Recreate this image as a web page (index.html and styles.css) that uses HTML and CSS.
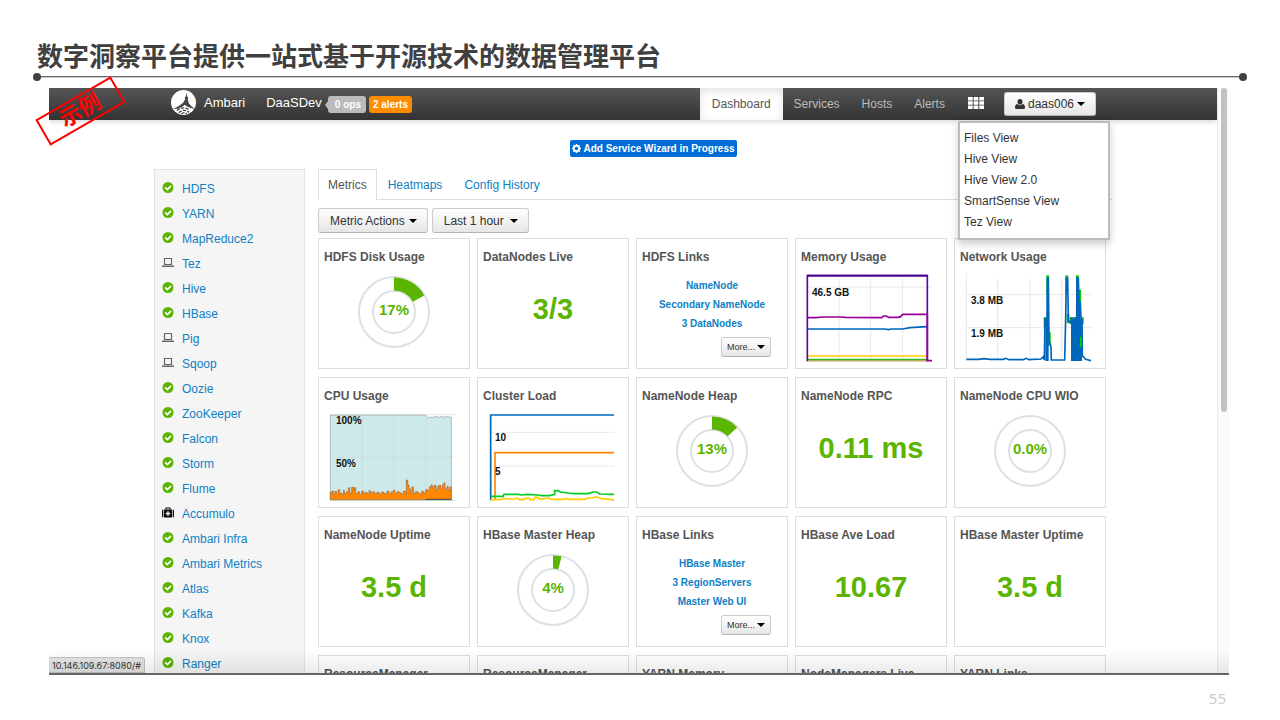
FILE: index.html
```html
<!DOCTYPE html>
<html lang="zh-CN">
<head>
  <meta charset="UTF-8" />
  <meta name="viewport" content="width=device-width, initial-scale=1.0" />
  <title>数字洞察平台</title>
  <link rel="stylesheet" href="styles.css">
</head>
<body>
  <!-- shared icons -->
  <svg class="sprite" aria-hidden="true">
    <symbol id="ok" viewBox="0 0 10 10"><circle cx="5" cy="5" r="5" fill="#5ab400"/><path d="M2.4 4.9 4.4 6.9 7.8 3.5" fill="none" stroke="#fff" stroke-width="1.5"/></symbol>
    <symbol id="laptop" viewBox="0 0 12 11"><path d="M2.5 1.500h7v6h-7z" fill="none" stroke="#666" stroke-width="1.200"/><path d="M0 8.500h12v1.500H0z" fill="#666"/></symbol>
    <symbol id="medkit" viewBox="0 0 12 11"><path d="M4 2.5V1h4v1.500" fill="none" stroke="#111" stroke-width="1.2"/><path d="M1.300 2.500Q0 2.500 0 3.500v6q0 1 1.300 1zM2 2.500h8v8H2zM10.700 2.500Q12 2.500 12 3.500v6q0 1-1.300 1z" fill="#111"/><path d="M6 4.300v4.400M3.800 6.500h4.400" stroke="#fff" stroke-width="1.400"/></symbol>
  </svg>

  <header class="slide-head">
    <h1>数字洞察平台提供一站式基于开源技术的数据管理平台</h1>
  </header>

  <main class="stage">
    <div class="window">
      <div class="page">
        <nav class="navbar">
          <div class="container nav-inner">
            <svg class="logo" viewBox="0 0 76 76">
              <circle cx="38" cy="38" r="38" fill="#fff"/>
              <path d="M47 7 49 20 52 23 51 28 54 40 63 50 73 58 60 55 49 50 42 45 33 52 20 57 6 58 24 49 37 39 43 28 42 23 45 20z" fill="#444"/>
              <path d="M18 62Q36 48 57 60M24 69Q38 55 55 68M32 73Q39 65 48 73" fill="none" stroke="#444" stroke-width="4" stroke-dasharray="10 4"/>
            </svg>
            <a class="brand" href="#">Ambari</a>
            <a class="cluster" href="#">DaaSDev</a>
            <a class="badge ops" href="#">0 ops</a>
            <a class="badge alerts" href="#">2 alerts</a>
            <div class="nav-links">
              <a class="active" href="#">Dashboard</a>
              <a href="#">Services</a>
              <a href="#">Hosts</a>
              <a href="#">Alerts</a>
              <button class="views" aria-label="Views">
                <svg width="16" height="12" viewBox="0 0 16 12" fill="#fff"><path d="M0 0h4.700v3.400H0zM5.600 0h4.700v3.400H5.600zM11.300 0H16v3.400h-4.700zM0 4.300h4.700v3.400H0zM5.600 4.300h4.700v3.400H5.600zM11.300 4.300H16v3.400h-4.700zM0 8.600h4.700V12H0zM5.600 8.600h4.700V12H5.600zM11.300 8.600H16V12h-4.700z"/></svg>
              </button>
            </div>
            <button class="btn user">
              <svg width="10" height="10" viewBox="0 0 10 10" fill="#333"><path d="M5 0Q7.500 0 7.500 2.800 7.500 5.600 5 5.600 2.500 5.600 2.500 2.800 2.500 0 5 0zM2.500 5Q5 7.500 7.500 5 10 5.200 10 8.500 10 10 8.500 10h-7Q0 10 0 8.500 0 5.200 2.500 5z"/></svg>
              daas006 <i class="caret"></i>
            </button>
            <div class="dropdown">
              <a href="#">Files View</a>
              <a href="#">Hive View</a>
              <a href="#">Hive View 2.0</a>
              <a href="#">SmartSense View</a>
              <a href="#">Tez View</a>
            </div>
          </div>
        </nav>

        <div class="container notice">
          <a class="wizard" href="#">
            <svg width="9" height="9" viewBox="0 0 10 10"><circle cx="5" cy="5" r="3" fill="none" stroke="#fff" stroke-width="2"/><path d="M5 0v2M5 8v2M0 5h2M8 5h2M1.500 1.500 3 3M7 7l1.500 1.500M1.500 8.500 3 7M7 3l1.500-1.500" stroke="#fff" stroke-width="1.800"/></svg>
            Add Service Wizard in Progress
          </a>
        </div>

        <div class="container columns">
          <aside class="sidebar">
            <a href="#"><svg><use href="#ok"/></svg>HDFS</a>
            <a href="#"><svg><use href="#ok"/></svg>YARN</a>
            <a href="#"><svg><use href="#ok"/></svg>MapReduce2</a>
            <a href="#"><svg><use href="#laptop"/></svg>Tez</a>
            <a href="#"><svg><use href="#ok"/></svg>Hive</a>
            <a href="#"><svg><use href="#ok"/></svg>HBase</a>
            <a href="#"><svg><use href="#laptop"/></svg>Pig</a>
            <a href="#"><svg><use href="#laptop"/></svg>Sqoop</a>
            <a href="#"><svg><use href="#ok"/></svg>Oozie</a>
            <a href="#"><svg><use href="#ok"/></svg>ZooKeeper</a>
            <a href="#"><svg><use href="#ok"/></svg>Falcon</a>
            <a href="#"><svg><use href="#ok"/></svg>Storm</a>
            <a href="#"><svg><use href="#ok"/></svg>Flume</a>
            <a href="#"><svg><use href="#medkit"/></svg>Accumulo</a>
            <a href="#"><svg><use href="#ok"/></svg>Ambari Infra</a>
            <a href="#"><svg><use href="#ok"/></svg>Ambari Metrics</a>
            <a href="#"><svg><use href="#ok"/></svg>Atlas</a>
            <a href="#"><svg><use href="#ok"/></svg>Kafka</a>
            <a href="#"><svg><use href="#ok"/></svg>Knox</a>
            <a href="#"><svg><use href="#ok"/></svg>Ranger</a>
          </aside>

          <section class="main">
            <div class="tabs">
              <a class="active" href="#">Metrics</a>
              <a href="#">Heatmaps</a>
              <a href="#">Config History</a>
            </div>
            <div class="toolbar">
              <button class="btn">Metric Actions <i class="caret"></i></button>
              <button class="btn">Last 1 hour <i class="caret wide"></i></button>
            </div>

            <div class="widgets">
              <div class="widget">
                <h2>HDFS Disk Usage</h2>
                <svg class="donut"><circle class="ring" cx="36" cy="36" r="35"/><circle class="ring" cx="36" cy="36" r="21"/><circle class="slice" cx="36" cy="36" r="28" pathLength="100" stroke-dasharray="17 83" transform="rotate(-90 36 36)"/><text x="36" y="39">17%</text></svg>
              </div>
              <div class="widget">
                <h2>DataNodes Live</h2>
                <p class="value">3/3</p>
              </div>
              <div class="widget">
                <h2>HDFS Links</h2>
                <div class="links">
                  <a href="#">NameNode</a>
                  <a href="#">Secondary NameNode</a>
                  <a href="#">3 DataNodes</a>
                </div>
                <button class="btn more">More... <i class="caret"></i></button>
              </div>
              <div class="widget">
                <h2>Memory Usage</h2>
                <svg class="chart">
                  <svg viewBox="0 0 378 264" fill="none" stroke-width="5">
                    <path class="grid" d="M99 15V260M194 15V260M290 15V260M4 39H378"/>
                    <path d="M4 246H364" stroke="#fc0"/>
                    <path d="M4 257H364" stroke="#3b2"/>
                    <path d="M4 261H364" stroke="#c60" stroke-width="2"/>
                    <path d="M4 165H235L248 167 256 165H290L312 161 364 158" stroke="#06b"/>
                    <path d="M4 131 30 131 50 129 105 129 120 130 228 131 232 126 240 126 248 130H276L284 128 290 121H364" stroke="#909"/>
                    <path d="M4 262V5H364V262" stroke="#60a"/>
                    <path d="M4 5H364" stroke="#408"/>
                    <path d="M364 120V260H378" stroke="#909"/>
                  </svg>
                  <text x="6" y="22">46.5 GB</text>
                </svg>
              </div>
              <div class="widget">
                <h2>Network Usage</h2>
                <svg class="chart">
                  <svg viewBox="0 0 378 264" fill="none" stroke-width="5">
                    <path class="grid" d="M4 0V260M98 15V260M195 15V260M290 15V260M4 62H378M4 161H378"/>
                    <path d="M248 4V60M305 4V60M337 4V60M344 47V90M240 130V160M253 175V215M309 120V148M318 130V150M332 130V150M346 185V225M352 130V150" stroke="#0c0" stroke-width="8"/>
                    <path d="M4 256H40L58 254 75 256 115 256 122 253 132 257 175 257 184 253 192 257 228 255 235 248 238 258 240 134 246 134 247 12 250 12 252 200 258 218 259 258H299L302 134 304 12 308 12 310 140 316 146 320 132 335 132 336 12 340 12 342 85 346 85 348 132 351 134 352 245 362 256 378 260" stroke="#06b"/>
                    <path d="M318 134H335V12H341V85H346V134H352V190H345V220H351V261H318zM241 134H246V12H251V261H241z" fill="#06b"/>
                  </svg>
                  <text x="6" y="30">3.8 MB</text>
                  <text x="6" y="63">1.9 MB</text>
                </svg>
              </div>

              <div class="widget">
                <h2>CPU Usage</h2>
                <svg class="chart">
                  <svg viewBox="0 0 378 264" fill="none" stroke-width="2">
                    <path d="M4 6H290L296 15 304 12 312 13 320 10 330 13 338 10 346 13 355 11 367 13V260H4z" fill="#cceaea" stroke="#999"/>
                    <path class="grid" d="M100 15V260M195 15V260M291 15V260M4 5H380M4 133H380"/>
                    <path d="M4 260V238H9V234H13V244H18V235H23V242H28V230H32V240H37V244H43V232H46V242H52V236H58V224H62V240H68V223H73V232H76V224H80V242H87V236H91V244H98V234H103V242H108V238H114V243H120V233H124V239H131V236H137V242H144V238H151V244H158V237H164V242H170V240H175V234H180V242H187V236H193V232H198V242H204V236H210V239H217V243H223V234H229V244H232V201H236V216H240V228H245V240H249V222H253V242H259V236H266V240H272V243H278V235H283V240H290V230H296V234H301V222H306V216H310V225H315V217H321V232H326V220H330V217H335V227H340V215H345V209H348V229H354V220H358V232H363V222H367V260z" fill="#f80" stroke="#a86238"/>
                    <path d="M4 262H380" stroke="#9c9"/>
                    <path d="M290 259H367" stroke="#446" stroke-width="3"/>
                  </svg>
                  <text x="7" y="11">100%</text>
                  <text x="7" y="54">50%</text>
                </svg>
              </div>
              <div class="widget">
                <h2>Cluster Load</h2>
                <svg class="chart">
                  <svg viewBox="0 0 378 264" fill="none" stroke-width="5">
                    <path class="grid" d="M8 58H380M8 159H380"/>
                    <path d="M8 262V6H380" stroke="#06b"/>
                    <path d="M21 262V119H380" stroke="#f80"/>
                    <path d="M8 260 40 259 48 256 62 258 80 258 86 255 94 260 108 260 110 256 124 256 126 260 138 260 140 253 150 253 154 259 180 255 190 259 230 259 235 256 245 259 290 259 300 255 315 255 320 252 328 252 340 257 380 261" stroke="#fc0"/>
                    <path d="M8 250H45L48 244H92L97 246 118 244 150 246 160 248H185L200 244V233L210 233 218 237 240 240 260 242 300 242 316 237 326 237 335 243 380 244" stroke="#0c2"/>
                  </svg>
                  <text x="7" y="28">10</text>
                  <text x="7" y="62">5</text>
                </svg>
              </div>
              <div class="widget">
                <h2>NameNode Heap</h2>
                <svg class="donut"><circle class="ring" cx="36" cy="36" r="35"/><circle class="ring" cx="36" cy="36" r="21"/><circle class="slice" cx="36" cy="36" r="28" pathLength="100" stroke-dasharray="13 87" transform="rotate(-90 36 36)"/><text x="36" y="39">13%</text></svg>
              </div>
              <div class="widget">
                <h2>NameNode RPC</h2>
                <p class="value">0.11 ms</p>
              </div>
              <div class="widget">
                <h2>NameNode CPU WIO</h2>
                <svg class="donut"><circle class="ring" cx="36" cy="36" r="35"/><circle class="ring" cx="36" cy="36" r="21"/><text x="36" y="39">0.0%</text></svg>
              </div>

              <div class="widget">
                <h2>NameNode Uptime</h2>
                <p class="value">3.5 d</p>
              </div>
              <div class="widget">
                <h2>HBase Master Heap</h2>
                <svg class="donut"><circle class="ring" cx="36" cy="36" r="35"/><circle class="ring" cx="36" cy="36" r="21"/><circle class="slice" cx="36" cy="36" r="28" pathLength="100" stroke-dasharray="4 96" transform="rotate(-90 36 36)"/><text x="36" y="39">4%</text></svg>
              </div>
              <div class="widget">
                <h2>HBase Links</h2>
                <div class="links">
                  <a href="#">HBase Master</a>
                  <a href="#">3 RegionServers</a>
                  <a href="#">Master Web UI</a>
                </div>
                <button class="btn more">More... <i class="caret"></i></button>
              </div>
              <div class="widget">
                <h2>HBase Ave Load</h2>
                <p class="value">10.67</p>
              </div>
              <div class="widget">
                <h2>HBase Master Uptime</h2>
                <p class="value">3.5 d</p>
              </div>

              <div class="widget"><h2>ResourceManager</h2></div>
              <div class="widget"><h2>ResourceManager</h2></div>
              <div class="widget"><h2>YARN Memory</h2></div>
              <div class="widget"><h2>NodeManagers Live</h2></div>
              <div class="widget"><h2>YARN Links</h2></div>
            </div>
          </section>
        </div>
      </div>
      <div class="scrollbar"><div class="thumb"></div></div>
      <div class="status">10.146.109.67:8080/#</div>
    </div>
    <div class="stamp">示例</div>
  </main>

  <footer class="slide-foot">55</footer>
</body>
</html>
```
FILE: styles.css
```css
* {
  box-sizing: border-box;
  margin: 0;
  padding: 0;
}

body {
  height: 100vh;
  display: flex;
  flex-direction: column;
  background: #fff;
  color: #444;
  font-family: "Liberation Sans", "Noto Sans CJK SC", sans-serif;
  font-size: 12px;
  overflow: hidden;
}

a {
  color: #0f80c4;
  text-decoration: none;
}

button {
  font-family: inherit;
  cursor: pointer;
}

.sprite {
  position: absolute;
  width: 0;
  height: 0;
}

/* slide title */
.slide-head {
  position: relative;
  height: 77px;
  flex-shrink: 0;
  margin: 0 37px;
  padding-top: 36px;
  border-bottom: 1px solid #6b6b6b;
  box-shadow: 0 1px 0 #c8c8c8;
}

.slide-head h1 {
  font-family: "Noto Sans CJK SC", sans-serif;
  font-size: 26px;
  line-height: 38px;
  color: #404040;
  white-space: nowrap;
}

.slide-head::before,
.slide-head::after {
  content: "";
  position: absolute;
  bottom: -5px;
  width: 8px;
  height: 8px;
  border-radius: 50%;
  background: #404040;
}

.slide-head::before {
  left: -4px;
}

.slide-head::after {
  right: -4px;
}

/* browser window */
.stage {
  position: relative;
  flex: 1;
  min-height: 0;
  margin: 11px 51px 0 49px;
}

.window {
  position: relative;
  display: flex;
  height: 100%;
  overflow: hidden;
  border-bottom: 2px solid #666;
}

.window::after {
  content: "";
  position: absolute;
  left: 0;
  right: 0;
  bottom: 0;
  height: 24px;
  background: linear-gradient(rgba(0, 0, 0, 0), rgba(0, 0, 0, 0.08));
  pointer-events: none;
}

.page {
  flex: 1;
  min-width: 0;
}

.container {
  max-width: 958px;
  margin: 0 auto;
}

.navbar {
  height: 32px;
  background: linear-gradient(#555, #333);
  box-shadow: 0 1px 6px rgba(0, 0, 0, 0.2);
}

.nav-inner {
  position: relative;
  display: flex;
  align-items: center;
  height: 32px;
  padding: 0 16px 0 17px;
}

.logo {
  width: 25px;
  height: 25px;
  margin: 0 8px 3px 0;
}

.brand,
.cluster {
  font-size: 13px;
  line-height: 16px;
  padding-bottom: 2px;
  color: #fff;
}

.cluster {
  margin: 0 6px 0 21px;
}

.badge {
  height: 17px;
  padding: 0 5px;
  border-radius: 3px;
  font-size: 10px;
  line-height: 17px;
  font-weight: bold;
  color: #fff;
}

.ops {
  position: relative;
  margin-right: 3px;
  padding-left: 7px;
  background: #bbb;
}

.ops::before {
  content: "";
  position: absolute;
  left: -3px;
  top: 5px;
  border: 4px solid transparent;
  border-left: 0;
  border-right: 3px solid #bbb;
}

.alerts {
  padding: 0 4px;
  background: #ff8c00;
}

.nav-links {
  display: flex;
  margin-left: auto;
}

.nav-links a {
  padding: 0 11px;
  line-height: 32px;
  color: #bbb;
}

.nav-links .active {
  padding: 0 12px;
  background: #fff;
  color: #555;
  box-shadow: inset 0 3px 8px rgba(0, 0, 0, 0.12);
}

.views {
  padding: 0 12px;
  border: 0;
  background: none;
}

.views svg {
  display: block;
  margin-bottom: 3px;
}

.btn {
  display: flex;
  align-items: center;
  justify-content: center;
  gap: 4px;
  height: 25px;
  padding: 0 11px;
  border: 1px solid #ccc;
  border-bottom-color: #b3b3b3;
  border-radius: 3px;
  background: linear-gradient(#fff, #e6e6e6);
  font-size: 12px;
  color: #333;
  white-space: nowrap;
}

.user {
  gap: 3px;
  height: 24px;
  margin-left: 8px;
  padding: 0 10px;
}

.caret {
  border: 4px solid transparent;
  border-top-color: #000;
  border-bottom: 0;
}

.toolbar .btn {
  padding: 0 10px 0 11px;
}

.wide {
  margin-left: 2px;
}

.dropdown {
  position: absolute;
  z-index: 2;
  top: 33px;
  right: 2px;
  width: 152px;
  padding: 5px 4px;
  border: 2px solid #bbb;
  background: #fff;
  box-shadow: 0 4px 8px rgba(0, 0, 0, 0.2);
}

.dropdown a {
  display: block;
  line-height: 21px;
  color: #333;
}

.notice {
  display: flex;
  justify-content: center;
  padding: 20px 0 12px 41px;
}

.wizard {
  display: flex;
  align-items: center;
  gap: 2px;
  height: 17px;
  padding: 0 2px;
  border-radius: 2px;
  background: #006dd6;
  font-size: 10px;
  font-weight: bold;
  color: #fff;
}

.columns {
  display: flex;
  gap: 13px;
}

.sidebar {
  width: 151px;
  flex-shrink: 0;
  padding: 6px 7px;
  border: 1px solid #e3e3e3;
  background: #f5f5f5;
}

.sidebar a {
  display: flex;
  align-items: center;
  height: 25px;
}

.sidebar svg {
  width: 12px;
  height: 11px;
  margin: 0 8px 3px 0;
}

.main {
  flex: 1;
  min-width: 0;
}

.tabs {
  display: flex;
  height: 31px;
  border-bottom: 1px solid #ddd;
}

.tabs a {
  padding: 0 11px;
  line-height: 32px;
}

.tabs .active {
  height: 31px;
  padding: 0 9px;
  border: 1px solid #ddd;
  border-bottom: 0;
  line-height: 30px;
  background: #fff;
  color: #555;
}

.toolbar {
  display: flex;
  gap: 4px;
  padding: 8px 0 5px;
}

.widgets {
  display: grid;
  grid-template-columns: repeat(5, 1fr);
  gap: 8px 7px;
  padding-right: 6px;
}

.widget {
  display: flex;
  flex-direction: column;
  height: 131px;
  padding: 10px 5px 0;
  border: 1px solid #ddd;
  background: #fff;
}

.widget h2 {
  font-size: 12px;
  line-height: 16px;
  color: #555;
  white-space: nowrap;
}

.value {
  margin-top: 25px;
  font-size: 29px;
  line-height: 38px;
  font-weight: bold;
  text-align: center;
  color: #5ab400;
}

.donut {
  width: 72px;
  height: 72px;
  flex-shrink: 0;
  margin: 11px auto 0;
}

.donut .ring {
  fill: none;
  stroke: #dde1e1;
  stroke-width: 2;
}

.donut .slice {
  fill: none;
  stroke: #5ab400;
  stroke-width: 13;
}

.donut text {
  font-size: 15px;
  font-weight: bold;
  text-anchor: middle;
  fill: #5ab400;
}

.chart {
  width: 126px;
  height: 88px;
  flex-shrink: 0;
  margin: 9px 0 0 5px;
}

.chart .grid {
  stroke: #ccc;
  stroke-width: 2;
  stroke-dasharray: 4 2;
}

.chart text {
  font-size: 10px;
  font-weight: bold;
  fill: #111;
}

.links {
  display: flex;
  flex-direction: column;
  align-items: center;
  padding-top: 11px;
  font-size: 10px;
  font-weight: bold;
  line-height: 19px;
}

.more {
  align-self: flex-end;
  gap: 2px;
  height: 20px;
  margin: 4px 11px 0 0;
  padding: 0 5px;
  font-size: 9px;
}

.scrollbar {
  width: 12px;
  padding: 0 2px 0 3px;
  border-left: 1px solid #e8e8e8;
  background: #fafafa;
}

.thumb {
  height: 324px;
  border-radius: 3px;
  background: #c1c1c1;
}

.status {
  position: absolute;
  left: 0;
  bottom: 0;
  height: 16px;
  padding: 0 3px;
  border: 1px solid #c4c4c4;
  border-left: 0;
  border-radius: 0 3px 0 0;
  background: #e4e4e4;
  font-family: Inter, sans-serif;
  font-size: 9px;
  line-height: 15px;
  color: #333;
}

.stamp {
  position: absolute;
  left: -12px;
  top: 8px;
  width: 87px;
  height: 30px;
  border: 2px solid #f00;
  transform: rotate(-30deg);
  font-size: 22px;
  line-height: 26px;
  font-weight: bold;
  text-align: center;
  color: #f00;
}

.slide-foot {
  height: 45px;
  flex-shrink: 0;
  padding: 13px 54px 0 0;
  font-family: "Noto Sans", sans-serif;
  font-size: 15px;
  line-height: 20px;
  text-align: right;
  color: #ccc;
}
```
